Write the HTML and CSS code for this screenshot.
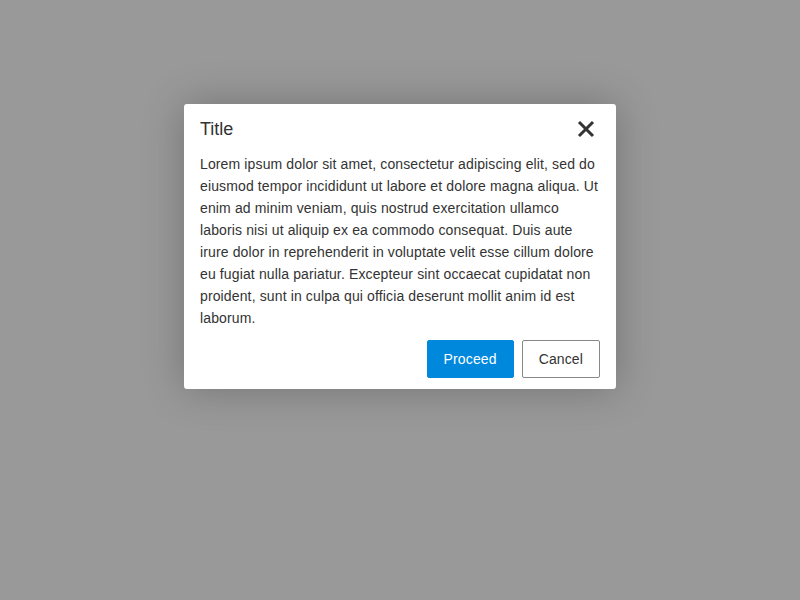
FILE: index.html
```html
<!DOCTYPE html>
<html>
<head>
<meta charset="utf-8">
<link rel="stylesheet" href="styles.css">
</head>
<body>
<div class="backdrop">
  <div class="dialog">
    <div class="header">
      <div class="title">Title</div>
      <button class="close" aria-label="Close">
        <svg width="18" height="18" viewBox="0 0 18 18"><path d="M2 2 L16 16 M16 2 L2 16" stroke="#333" stroke-width="3" fill="none"/></svg>
      </button>
    </div>
    <div class="body">Lorem ipsum dolor sit amet, consectetur adipiscing elit, sed do eiusmod tempor incididunt ut labore et dolore magna aliqua. Ut enim ad minim veniam, quis nostrud exercitation ullamco laboris nisi ut aliquip ex ea commodo consequat. Duis aute irure dolor in reprehenderit in voluptate velit esse cillum dolore eu fugiat nulla pariatur. Excepteur sint occaecat cupidatat non proident, sunt in culpa qui officia deserunt mollit anim id est laborum.</div>
    <div class="footer">
      <button class="btn primary">Proceed</button>
      <button class="btn secondary">Cancel</button>
    </div>
  </div>
</div>
</body>
</html>
```
FILE: styles.css
```css
html, body {
  margin: 0;
  padding: 0;
  width: 800px;
  height: 600px;
  overflow: hidden;
}
body {
  font-family: "Liberation Sans", Arial, sans-serif;
  color: #333;
}
.backdrop {
  width: 800px;
  height: 600px;
  background: #999999;
  display: flex;
  justify-content: center;
  align-items: flex-start;
  padding-top: 104px;
  box-sizing: border-box;
}
.dialog {
  width: 432px;
  box-sizing: border-box;
  background: #fff;
  border-radius: 3px;
  padding: 0 16px 11px 16px;
  box-shadow: 0 0 40px rgba(0, 0, 0, 0.25);
}
.header {
  height: 49px;
  display: flex;
  align-items: center;
  justify-content: space-between;
}
.title {
  font-size: 18px;
  padding-top: 2px;
}
.close {
  border: 0;
  background: none;
  padding: 0;
  margin-right: 5px;
  margin-top: 1px;
  width: 18px;
  height: 18px;
  display: flex;
  cursor: pointer;
}
.body {
  font-size: 14px;
  line-height: 22px;
  letter-spacing: 0.13px;
}
.footer {
  margin-top: 11px;
  display: flex;
  justify-content: flex-end;
  gap: 8px;
}
.btn {
  font-family: "Liberation Sans", Arial, sans-serif;
  font-size: 14px;
  letter-spacing: 0.13px;
  height: 38px;
  padding: 0 16px;
  border-radius: 2px;
  cursor: pointer;
}
.primary {
  background: #0088dd;
  color: #fff;
  border: 1px solid #0088dd;
}
.secondary {
  background: #fff;
  color: #333;
  border: 1px solid #888;
}
```
